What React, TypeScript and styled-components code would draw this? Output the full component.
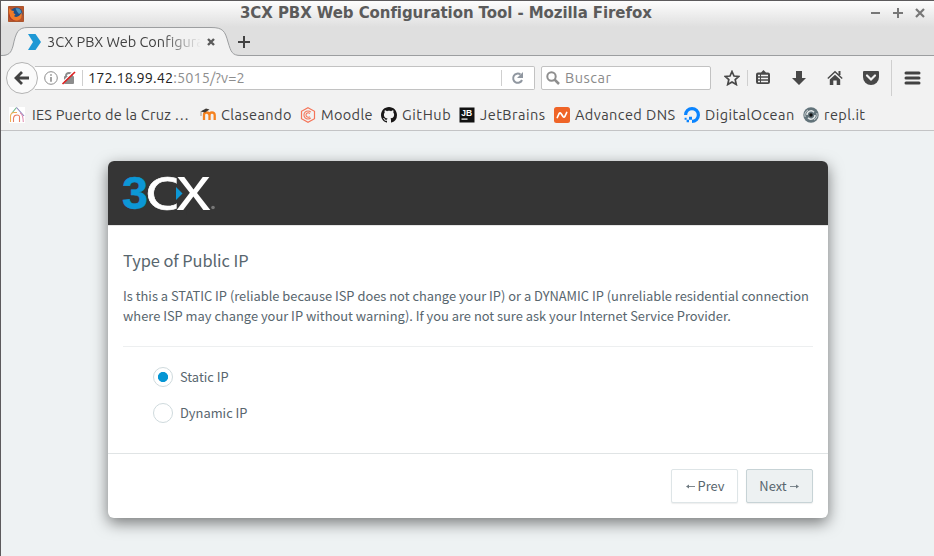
import React from "react";
import styled, { createGlobalStyle } from "styled-components";

const Global = createGlobalStyle`
  *, *::before, *::after { box-sizing: border-box; }
  body { margin: 0; background: #eef2f3; overflow: hidden; }
  svg { display: block; flex: none; }
`;

const chromeFont = `"Ubuntu", "Noto Sans", "Open Sans", sans-serif`;
const pageFont = `"Source Sans Pro", "Noto Sans CJK SC", sans-serif`;

const Window = styled.div`
  width: 934px;
  height: 556px;
  display: flex;
  flex-direction: column;
  border-top: 1px solid #5c5a5c;
  border-left: 1px solid #5c5a5c;
  background: #eef2f3;
  font-family: ${chromeFont};
`;

const TopChrome = styled.div`
  height: 55px;
  background: linear-gradient(#fdfdfd, #dfdfdf 26px, #dfdfdf);
  border-bottom: 1px solid #9c9ea0;
`;

const TitleBar = styled.header`
  height: 25px;
  display: flex;
  align-items: center;
  padding: 0 9px 0 7px;
`;

const WindowTitle = styled.h1`
  flex: 1;
  margin: 0;
  padding: 0 0 2px 216px;
  font: bold 15px/22px "DejaVu Sans", sans-serif;
  letter-spacing: -0.08px;
  color: #5b5b5b;
  white-space: nowrap;
`;

const WindowButtons = styled.div`
  display: flex;
  gap: 12px;
  padding-bottom: 2px;
`;

const TabStrip = styled.div`
  height: 30px;
  display: flex;
`;

const Tab = styled.div`
  position: relative;
  width: 233px;
  height: 30px;
  display: flex;
  align-items: center;
  padding: 1px 0 0 27px;
`;

const TabShape = styled.svg`
  position: absolute;
  left: 0;
  top: 1px;
`;

const TabContent = styled.div`
  position: relative;
  display: flex;
  align-items: center;
`;

const TabTitle = styled.span`
  width: 154px;
  margin: 0 6px 0 6px;
  overflow: hidden;
  white-space: nowrap;
  font-size: 14.5px;
  line-height: 20px;
  color: #424242;
  mask-image: linear-gradient(to right, #000 115px, transparent 154px);
`;

const NewTab = styled.div`
  padding: 10px 0 0 4px;
`;

const NavBar = styled.nav`
  height: 43px;
  display: flex;
  align-items: center;
  background: #f2f2f2;
  padding-left: 5px;
`;

const BackButton = styled.div`
  position: relative;
  z-index: 1;
  width: 32px;
  height: 32px;
  border: 1px solid #b3b3b3;
  border-radius: 50%;
  background: #fafafa;
  display: grid;
  place-items: center;
`;

const UrlBar = styled.div`
  width: 500px;
  height: 24px;
  margin-left: -3px;
  padding-left: 9px;
  display: flex;
  align-items: center;
  background: #fff;
  border: 1px solid #c2c2c2;
  border-left: 0;
  border-radius: 0 2px 2px 0;
`;

const Rule = styled.i<{ $h: number }>`
  width: 1px;
  height: ${(p) => p.$h}px;
  background: #cfcfcf;
`;

const Url = styled.span`
  flex: 1;
  padding-left: 5px;
  font-size: 14.5px;
  line-height: 22px;
  letter-spacing: 0.08px;
  color: #8e8e8e;
  white-space: nowrap;
  b { font-weight: 400; color: #222; }
`;

const SearchBox = styled.div`
  width: 170px;
  height: 24px;
  margin-left: 6px;
  padding-left: 4px;
  display: flex;
  align-items: center;
  gap: 5px;
  background: #fff;
  border: 1px solid #c2c2c2;
  border-radius: 2px;
  font-size: 14.5px;
  line-height: 22px;
  letter-spacing: 0.5px;
  color: #8a8a8a;
`;

const Tools = styled.div`
  flex: 1;
  display: flex;
  align-items: center;
  padding-left: 13px;
`;

const Tool = styled.span<{ $gap: number }>`
  margin-right: ${(p) => p.$gap}px;
`;

const Bookmarks = styled.div`
  height: 32px;
  display: flex;
  padding-left: 8px;
  background: #f2f2f2;
  border-bottom: 1px solid #c3c4c5;
`;

const Bookmark = styled.a<{ $w: number; $ls: number; $gap?: number }>`
  width: ${(p) => p.$w}px;
  height: 31px;
  display: flex;
  align-items: center;
  gap: ${(p) => p.$gap ?? 5}px;
  font-size: 14.5px;
  letter-spacing: ${(p) => p.$ls}px;
  color: #424242;
  white-space: nowrap;
  svg { width: 16px; height: 16px; }
`;

const Page = styled.main`
  flex: 1;
  padding: 30px 0 0 107px;
  background: #eef2f3;
  font-family: ${pageFont};
  color: #58666e;
`;

const Card = styled.section`
  width: 720px;
  height: 357px;
  display: flex;
  flex-direction: column;
  border-radius: 6px;
  background: #fff;
  box-shadow: 0 5px 15px rgba(0, 0, 0, 0.5);
`;

const CardHeader = styled.header`
  height: 65px;
  padding: 12px 15px 0 12px;
  border-radius: 6px 6px 0 0;
  background: #353535;
  border-bottom: 1px solid #e5e5e5;
`;

const Logo = styled.svg`
  overflow: visible;
`;

const CardBody = styled.div`
  flex: 1;
  padding: 0 15px;
`;

const Heading = styled.h2`
  margin: 22px 0 0;
  font-size: 16.4px;
  letter-spacing: -0.05px;
  font-weight: 400;
  line-height: 24px;
`;

const Lead = styled.p`
  margin: 14px 0 0;
  height: 61px;
  border-bottom: 1px solid #edeff0;
  font-size: 12.88px;
  line-height: 20px;
  white-space: nowrap;
`;

const Options = styled.div`
  display: flex;
  flex-direction: column;
  gap: 16px;
  padding: 20px 0 0 30px;
`;

const Option = styled.label`
  height: 20px;
  display: flex;
  align-items: center;
  gap: 7px;
  font-size: 12.88px;
  line-height: 20px;
`;

const Radio = styled.span<{ $on?: boolean }>`
  width: 20px;
  height: 20px;
  border: 1px solid #cfdadd;
  border-radius: 50%;
  background: ${(p) => (p.$on ? "radial-gradient(circle, #0596d4 4.7px, #fff 5.4px)" : "#fff")};
`;

const CardFooter = styled.footer`
  height: 65px;
  display: flex;
  justify-content: flex-end;
  gap: 8px;
  padding: 15px 15px 0;
  border-top: 1px solid #e0e4e5;
`;

const Button = styled.button<{ $primary?: boolean }>`
  width: 67px;
  height: 34px;
  padding: 0;
  display: flex;
  align-items: center;
  justify-content: center;
  gap: 2px;
  border: 1px solid ${(p) => (p.$primary ? "#c7d3d6" : "#dee5e7")};
  border-radius: 2px;
  background: ${(p) => (p.$primary ? "#edf1f2" : "#fff")};
  box-shadow: 0 1px 1px rgba(90, 90, 90, 0.1);
  font: 12.88px/20px ${pageFont};
  color: #58666e;
`;

const Arrow = ({ flip }: { flip?: boolean }) => (
  <svg width="11" height="8" viewBox="0 0 11 8">
    <g transform={flip ? "translate(11 0) scale(-1 1)" : undefined}>
      <path d="M1 4.500H9" stroke="#7f898f" fill="none" />
      <path d="M7 2.500L10 4.500L7 6.500Z" fill="#6d787f" />
    </g>
  </svg>
);

const FirefoxIcon = () => (
  <svg width="16" height="16" viewBox="0 0 16 16">
    <rect width="16" height="16" rx="1" fill="#b9552c" />
    <circle cx="8.500" cy="7.500" r="6" fill="#1f4f86" />
    <path d="M7.500 2.500C11 1.500 13 3.500 13.500 6.500L11 8L9 5.500Z" fill="#4b92bd" />
    <path d="M1 2L3.500 4.500L6 5L5.500 7L7.500 8.500L6 10C8 12 12 10.500 13.500 6.500C15 12 12 14.500 8 14.500C3 14.500 1 11 1 8Z" fill="#f07a28" />
    <path d="M1.500 6C1 11 4 14 8 14.500C4 15 1 13 1 9Z" fill="#a93228" />
    <rect x=".5" y=".5" width="15" height="15" rx="1" fill="none" stroke="#a8562f" />
  </svg>
);

type BookmarkData = { label: string; w: number; ls: number; gap?: number; icon: React.ReactNode };

const bookmarks: BookmarkData[] = [
  {
    label: "IES Puerto de la Cruz …", w: 191, ls: 0.22, gap: 7,
    icon: (
      <svg viewBox="0 0 16 16">
        <rect width="16" height="16" fill="#fff" />
        <g fill="none" strokeWidth="1.1">
          <path d="M3 6L7.500 .5" stroke="#70b68a" />
          <path d="M7.500 .5L15 9" stroke="#8884bd" />
          <path d="M1.500 15V9Q2 5.500 5 5.500H8" stroke="#edae54" />
          <path d="M4.500 15V11Q5 8 8 8T10.500 11V15" stroke="#e98065" />
          <path d="M11 6Q14 7 14.300 15" stroke="#df8cb0" />
        </g>
      </svg>
    ),
  },
  {
    label: "Claseando", w: 100, ls: 0.4,
    icon: (
      <svg viewBox="0 0 16 16">
        <path d="M4 13V8Q4 5.500 6.500 5.500T9.500 8V13M9.500 8Q9.500 5.500 12 5.500T14.700 8V13" fill="none" stroke="#f58220" strokeWidth="2.300" />
        <path d="M.5 4.500L6 1.500L9.500 2.500L5 5.500Z" fill="#3d3935" />
        <path d="M1 4.500V9" stroke="#8a8580" strokeWidth=".8" />
      </svg>
    ),
  },
  {
    label: "Moodle", w: 81, ls: 0.35,
    icon: (
      <svg viewBox="0 0 16 16">
        <g fill="none" stroke="#f57458">
          <path d="M8 .7L14.500 4.300V11.700L8 15.300L1.500 11.700V4.300Z" strokeWidth="1.200" />
          <path d="M10.800 5.200A4 4 0 1 0 10.800 10.800M9.800 6.500A2.200 2.200 0 1 0 9.800 9.500" strokeWidth="1.100" />
        </g>
      </svg>
    ),
  },
  {
    label: "GitHub", w: 78, ls: 0.6,
    icon: (
      <svg viewBox="0 0 16 16">
        <path fill="#191717" d="M8 0C3.580 0 0 3.580 0 8c0 3.540 2.290 6.530 5.470 7.590.4.070.55-.17.55-.38 0-.19-.01-.82-.01-1.490-2.010.37-2.530-.49-2.690-.94-.09-.23-.48-.94-.82-1.130-.28-.15-.68-.52-.01-.53.63-.01 1.080.58 1.230.82.72 1.210 1.870.87 2.330.66.07-.52.28-.87.51-1.070-1.780-.2-3.640-.89-3.640-3.950 0-.87.31-1.590.82-2.150-.08-.2-.36-1.020.08-2.120 0 0 .67-.21 2.200.82.64-.18 1.320-.27 2-.27s1.360.09 2 .27c1.530-1.040 2.200-.82 2.200-.82.44 1.100.16 1.920.08 2.120.51.56.82 1.270.82 2.150 0 3.070-1.870 3.750-3.650 3.950.29.25.54.73.54 1.480 0 1.070-.01 1.930-.01 2.200 0 .21.15.46.55.38A8.010 8.010 0 0 0 16 8c0-4.420-3.580-8-8-8z" />
      </svg>
    ),
  },
  {
    label: "JetBrains", w: 95, ls: 0.5,
    icon: (
      <svg viewBox="0 0 16 16">
        <rect x=".5" y=".5" width="15" height="15" fill="#111" />
        <text x="2.300" y="8.700" fontFamily="Liberation Sans" fontWeight="bold" fontSize="8.500" fill="#fff" letterSpacing="0">JB</text>
        <rect x="2.500" y="11.500" width="6" height="1.200" fill="#fff" />
      </svg>
    ),
  },
  {
    label: "Advanced DNS", w: 130, ls: 0.42,
    icon: (
      <svg viewBox="0 0 16 16">
        <rect width="16" height="16" rx="2.500" fill="#ef6427" />
        <path d="M3.300 10.500L5.200 6.500Q6 5.200 7 6.500L9 9.500Q10 10.800 10.800 9.500L12.700 5.500" fill="none" stroke="#fff" strokeWidth="1.700" strokeLinecap="round" />
      </svg>
    ),
  },
  {
    label: "DigitalOcean", w: 119, ls: 0.45,
    icon: (
      <svg viewBox="0 0 16 16">
        <path d="M1.600 8A6.400 6.400 0 1 1 8 14.400" fill="none" stroke="#0a84ff" strokeWidth="3.200" />
        <path d="M5 9.800H8V12.800H5ZM2.600 12.800H5V15.200H2.600ZM.6 10.800H2.600V12.800H.6Z" fill="#0a84ff" />
      </svg>
    ),
  },
  {
    label: "repl.it", w: 70, ls: 0.4,
    icon: (
      <svg viewBox="0 0 16 16">
        <circle cx="8" cy="8" r="7.700" fill="#62737a" />
        <circle cx="8" cy="8" r="1.700" fill="#111" />
        <g fill="none" stroke="#e3e7e8">
          <path d="M4 8A4 4 0 0 1 11 5.200M12 8A4 4 0 0 1 5 10.800" strokeWidth="1.500" />
          <path d="M2.200 10A6 6 0 0 1 5 3M13.800 6A6 6 0 0 1 11 13" strokeWidth=".8" />
        </g>
      </svg>
    ),
  },
];

export default function App() {
  return (
    <>
      <Global />
      <Window>
        <TopChrome>
          <TitleBar>
            <FirefoxIcon />
            <WindowTitle>3CX PBX Web Configuration Tool - Mozilla Firefox</WindowTitle>
            <WindowButtons>
              <svg width="10" height="10"><path d="M0 5H9" stroke="#777" strokeWidth="2" /></svg>
              <svg width="10" height="10"><path d="M0 5H10M5 0V10" stroke="#777" strokeWidth="2" /></svg>
              <svg width="10" height="10"><path d="M1 1L9 9M9 1L1 9" stroke="#777" strokeWidth="2.200" /></svg>
            </WindowButtons>
          </TitleBar>
          <TabStrip>
            <Tab>
              <TabShape width="240" height="30" viewBox="0 0 240 30">
                <path d="M0 28.500C8 28.500 10 26 12 19C15 5 17 .5 27 .5H210C222 .5 224 4 227 15C230 25 231 28.500 240 28.500V30H0Z" fill="#f2f2f2" />
                <path d="M0 28.500C8 28.500 10 26 12 19C15 5 17 .5 27 .5H210C222 .5 224 4 227 15C230 25 231 28.500 240 28.500" fill="none" stroke="#9c9ea0" />
              </TabShape>
              <TabContent>
                <svg width="13" height="16"><path d="M0 0H7.500L13 8L7.500 16H0L5 8Z" fill="#1e98d5" /></svg>
                <TabTitle>3CX PBX Web Configuration Tool</TabTitle>
                <svg width="8" height="8"><path d="M1 1L7 7M7 1L1 7" stroke="#5a5a5a" strokeWidth="2.400" /></svg>
              </TabContent>
            </Tab>
            <NewTab>
              <svg width="12" height="12"><path d="M0 6H12M6 0V12" stroke="#424242" strokeWidth="2" /></svg>
            </NewTab>
          </TabStrip>
        </TopChrome>
        <NavBar>
          <BackButton>
            <svg width="16" height="16"><path d="M8 2L2 8L8 14M2.500 8H15" fill="none" stroke="#424242" strokeWidth="2.800" /></svg>
          </BackButton>
          <UrlBar>
            <svg width="14" height="14">
              <circle cx="7" cy="7" r="6.300" fill="none" stroke="#8c8c8c" />
              <path d="M6.200 3.200H7.800V4.800H6.200ZM6.200 6H7.800V10.800H6.200Z" fill="#8c8c8c" />
            </svg>
            <svg width="24" height="14">
              <rect x="6" y="5" width="10" height="8" rx="1" fill="#8c8c8c" />
              <path d="M8 6V4.500Q8 2 11 2T14 4.500V6" fill="none" stroke="#8c8c8c" strokeWidth="1.800" />
              <path d="M4 12L16 0" stroke="#fff" strokeWidth="1.500" />
              <path d="M4.500 13L17 1" stroke="#e02020" strokeWidth="1.700" />
            </svg>
            <Rule $h={16} />
            <Url><b>172.18.99.42</b>:5015/?v=2</Url>
            <Rule $h={16} />
            <svg width="32" height="14">
              <path d="M18.500 3.500A4.600 4.600 0 1 0 20 9" fill="none" stroke="#9097a0" strokeWidth="2" />
              <path d="M21 1V7H15Z" fill="#9097a0" />
            </svg>
          </UrlBar>
          <SearchBox>
            <svg width="14" height="14">
              <circle cx="5.500" cy="5.500" r="4.200" fill="none" stroke="#8e8e8e" strokeWidth="2" />
              <path d="M8.500 8.500L13 13" stroke="#8e8e8e" strokeWidth="2.500" />
            </svg>
            Buscar
          </SearchBox>
          <Tools>
            <Tool $gap={7}>
              <svg width="16" height="16"><path d="M8 1.500L10 6L14.800 6.500L11.200 9.600L12.300 14.500L8 11.900L3.700 14.500L4.800 9.600L1.200 6.500L6 6Z" fill="none" stroke="#484848" strokeWidth="1.700" /></svg>
            </Tool>
            <Rule $h={16} />
            <Tool $gap={21}>
              <svg width="23" height="16">
                <path d="M10 2.500H13L15.500 0L18 2.500H20Q22 2.500 22 4.500V12Q22 14 20 14H10Q8 14 8 12V4.500Q8 2.500 10 2.500Z" fill="#484848" />
                <path d="M10 5.500H12M13 5.500H20M10 8.500H12M13 8.500H20M10 11.500H12M13 11.500H20" stroke="#f2f2f2" strokeWidth="1.400" />
              </svg>
            </Tool>
            <Tool $gap={21}>
              <svg width="14" height="16"><path d="M4 1H10V8H14L7 15L0 8H4Z" fill="#484848" /></svg>
            </Tool>
            <Tool $gap={20}>
              <svg width="16" height="16">
                <path d="M.8 8.500L8 1.700L15.200 8.500" fill="none" stroke="#484848" strokeWidth="1.400" />
                <path d="M11.500 1H13.500V5H11.500ZM2.800 9.500L8 4.800L13.200 9.500V15H9.700V10.500H6.300V15H2.800Z" fill="#484848" />
              </svg>
            </Tool>
            <Tool $gap={12}>
              <svg width="16" height="16">
                <path d="M1 1H15Q16 1 16 2V7A8 8 0 0 1 0 7V2Q0 1 1 1Z" fill="#484848" />
                <path d="M4 5.500L8 9.500L12 5.500" fill="none" stroke="#f2f2f2" strokeWidth="2.200" strokeLinecap="round" />
              </svg>
            </Tool>
            <Rule $h={36} />
            <svg width="30" height="14"><path d="M14 2H27M14 7H27M14 12H27" stroke="#424242" strokeWidth="3" strokeLinecap="round" /></svg>
          </Tools>
        </NavBar>
        <Bookmarks>
          {bookmarks.map((b) => (
            <Bookmark key={b.label} $w={b.w} $ls={b.ls} $gap={b.gap}>
              {b.icon}
              <span>{b.label}</span>
            </Bookmark>
          ))}
        </Bookmarks>
        <Page>
          <Card>
            <CardHeader>
              <Logo width="100" height="42" viewBox="0 0 100 42">
                <text x="2" y="36.300" fontFamily="Liberation Sans" fontWeight="bold" fontSize="47" textLength="26" lengthAdjust="spacingAndGlyphs" fill="#0c97d6" stroke="#0c97d6" strokeWidth=".5">3</text>
                <text x="25.500" y="36.500" fontFamily="Lato" fontSize="46.500" textLength="37" lengthAdjust="spacingAndGlyphs" fill="#fff" stroke="#fff" strokeWidth=".6">C</text>
                <rect x="56.700" y="0" width="10" height="42" fill="#353535" />
                <text x="56.500" y="36.500" fontFamily="Noto Sans" fontWeight="500" fontSize="45" textLength="34" lengthAdjust="spacingAndGlyphs" fill="#fff">X</text>
                <path d="M56 14L62.500 20.500L56 27Z" fill="#0c97d6" />
                <circle cx="93" cy="34.500" r="1.800" fill="#777" />
              </Logo>
            </CardHeader>
            <CardBody>
              <Heading>Type of Public IP</Heading>
              <Lead>
                Is this a STATIC IP (reliable because ISP does not change your IP) or a DYNAMIC IP (unreliable residential connection
                <br />
                where ISP may change your IP without warning). If you are not sure ask your Internet Service Provider.
              </Lead>
              <Options>
                <Option><Radio $on />Static IP</Option>
                <Option><Radio />Dynamic IP</Option>
              </Options>
            </CardBody>
            <CardFooter>
              <Button><Arrow flip />Prev</Button>
              <Button $primary>Next<Arrow /></Button>
            </CardFooter>
          </Card>
        </Page>
      </Window>
    </>
  );
}
